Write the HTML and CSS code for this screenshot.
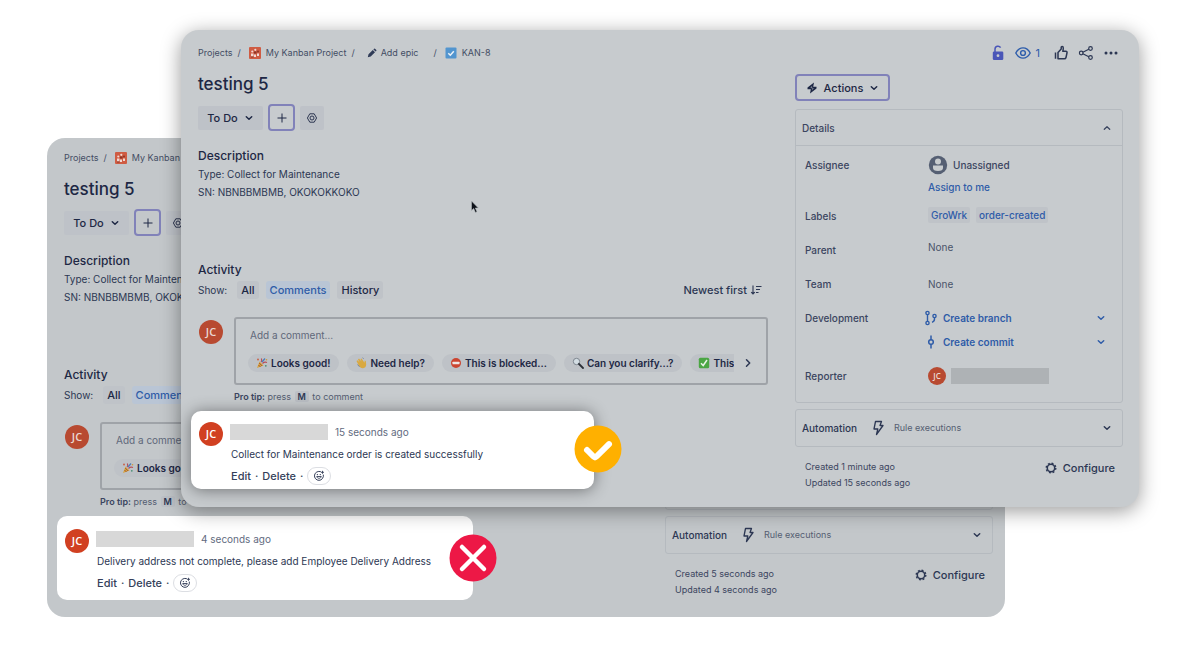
FILE: index.html
```html
<!DOCTYPE html>
<html lang="en">
<head>
    <meta charset="UTF-8">
    <meta name="viewport" content="width=device-width, initial-scale=1.0">
    <title>testing 5 - KAN-8</title>
    <link rel="stylesheet" href="styles.css">
</head>
<body>
    <!-- shared icons -->
    <svg class="sprite" aria-hidden="true">
        <symbol id="project" viewBox="0 0 12 12">
            <rect width="12" height="12" rx="1" fill="#cf5c43"/>
            <path d="M2 6.500h2.500v3H2zM5 7.500h2v2.500H5zM8 6.500h2v2.500H8z" fill="#f1d9d3"/>
            <circle cx="3.300" cy="4.500" r="1.100" fill="#f1d9d3"/>
            <circle cx="6.300" cy="2.800" r="1.100" fill="#f1d9d3"/>
            <circle cx="9" cy="4.500" r="1" fill="#8c3526"/>
            <path d="M5 4.500h2.500v2H5zM2 9.500h2.500v1H2z" fill="#8c3526"/>
        </symbol>
        <symbol id="down" viewBox="0 0 10 10">
            <path d="M2.300 3.800 5 6.300l2.700-2.500" fill="none" stroke="currentColor" stroke-width="1.500" stroke-linecap="round" stroke-linejoin="round"/>
        </symbol>
        <symbol id="plus" viewBox="0 0 12 12">
            <path d="M6 1.500v9M1.500 6h9" fill="none" stroke="currentColor" stroke-width="1"/>
        </symbol>
        <symbol id="hexagon" viewBox="0 0 12 12">
            <path d="M3.800 1.800h4.400L10.600 6l-2.400 4.200H3.800L1.400 6z" fill="none" stroke="currentColor" stroke-width=".9" stroke-linejoin="round"/>
            <circle cx="6" cy="6" r="2" fill="none" stroke="currentColor" stroke-width=".9"/>
        </symbol>
        <symbol id="party" viewBox="0 0 12 12">
            <path d="M1 11 3.500 4.500l4 4z" fill="#d9a33c"/>
            <path d="m2.500 8 2 2M3.200 6l3 3" stroke="#a05a35" stroke-width="1"/>
            <path d="M5 5c1-1 1-2 .4-3.500M6.500 6.500c1.500-1.500 3-1.500 4.500-1" fill="none" stroke="#b84f58" stroke-width="1.200"/>
            <path d="m6 5 3-3.500" stroke="#4d7fba" stroke-width="1.300"/>
            <circle cx="2" cy="2.500" r=".9" fill="#c95c42"/>
            <circle cx="10.500" cy="2.800" r=".8" fill="#d19a35"/>
            <circle cx="9.800" cy="8.800" r=".9" fill="#4a8f75"/>
        </symbol>
        <symbol id="bolt" viewBox="0 0 14 16">
            <path d="M4.500 1.500h6L9 5.500h3L5.500 14.500 6.800 9H3z" fill="none" stroke="currentColor" stroke-width="1.300" stroke-linejoin="round"/>
        </symbol>
        <symbol id="gear" viewBox="0 0 12 12">
            <circle cx="6" cy="6" r="3.700" fill="none" stroke="currentColor" stroke-width="1.500"/>
            <circle cx="6" cy="6" r="4.800" fill="none" stroke="currentColor" stroke-width="1.400" stroke-dasharray="1.900 1.870"/>
        </symbol>
        <symbol id="smile" viewBox="0 0 12 12">
            <path d="M7.500 1.600A4.500 4.500 0 1 0 10.400 5" fill="none" stroke="currentColor" stroke-width="1" stroke-linecap="round"/>
            <path d="M3.700 6.500c.6 2.400 4 2.400 4.600 0z" fill="none" stroke="currentColor" stroke-width=".9"/>
            <circle cx="4.400" cy="4.600" r=".7" fill="currentColor"/>
            <circle cx="7.300" cy="4.600" r=".7" fill="currentColor"/>
            <path d="M9.500.8v3M8 2.300h3" stroke="currentColor" stroke-width=".9"/>
        </symbol>
    </svg>

    <div class="stage">
        <!-- failed request -->
        <section class="panel panel-back">
            <div class="main">
                <nav class="breadcrumb">
                    <a href="#">Projects</a><span>/</span>
                    <svg class="icon-12"><use href="#project"/></svg>
                    <a href="#">My Kanban Project</a>
                </nav>
                <h1>testing 5</h1>
                <div class="toolbar">
                    <button class="status">To Do <svg class="icon-10"><use href="#down"/></svg></button>
                    <button class="add" aria-label="Add"><svg class="icon-12"><use href="#plus"/></svg></button>
                    <button class="square" aria-label="Apps"><svg class="icon-12"><use href="#hexagon"/></svg></button>
                </div>
                <h2>Description</h2>
                <p>Type: Collect for Maintenance</p>
                <p>SN: NBNBBMBMB, OKOKOKKOKO</p>

                <h2 class="activity">Activity</h2>
                <div class="show">
                    <span>Show:</span>
                    <button class="tab">All</button>
                    <button class="tab active">Comments</button>
                </div>
                <div class="composer">
                    <span class="avatar">JC</span>
                    <div class="box">
                        <input type="text" placeholder="Add a comment…" aria-label="Comment">
                        <div class="chips">
                            <button class="chip"><svg class="icon-12"><use href="#party"/></svg>Looks good!</button>
                        </div>
                    </div>
                </div>
                <p class="tip"><b>Pro tip:</b> press <kbd>M</kbd> to comment</p>

                <article class="comment">
                    <span class="avatar">JC</span>
                    <div class="comment-body">
                        <div class="meta"><span class="name"></span><time>4 seconds ago</time></div>
                        <p class="message">Delivery address not complete, please add Employee Delivery Address</p>
                        <div class="links">
                            <button>Edit</button><span>·</span><button>Delete</button><span>·</span>
                            <button class="react" aria-label="React"><svg class="icon-12"><use href="#smile"/></svg></button>
                        </div>
                    </div>
                    <svg class="badge" viewBox="0 0 48 48" aria-label="Failed">
                        <circle cx="24" cy="24" r="23.500" fill="#ed1846"/>
                        <path d="m13 13 22 22M35 13 13 35" stroke="#fff" stroke-width="4.500" stroke-linecap="round"/>
                    </svg>
                </article>
            </div>
            <aside class="side">
                <div class="details"></div>
                <div class="automation">
                    <strong>Automation</strong>
                    <svg class="icon-bolt"><use href="#bolt"/></svg>
                    <span>Rule executions</span>
                    <svg class="icon-10"><use href="#down"/></svg>
                </div>
                <footer>
                    <div>
                        <p>Created 5 seconds ago</p>
                        <p>Updated 4 seconds ago</p>
                    </div>
                    <button class="configure"><svg class="icon-12"><use href="#gear"/></svg>Configure</button>
                </footer>
            </aside>
        </section>

        <!-- successful request -->
        <section class="panel panel-front">
            <div class="main">
                <nav class="breadcrumb">
                    <a href="#">Projects</a><span>/</span>
                    <svg class="icon-12"><use href="#project"/></svg>
                    <a href="#">My Kanban Project</a><span>/</span>
                    <a href="#" class="epic">
                        <svg class="icon-10" viewBox="0 0 10 10"><path d="m.8 9.200.7-2.900 4.300-4.300 2.200 2.200-4.300 4.300zM6.400 1.400l.7-.7q.6-.4 1.200.2l.8.8q.6.600.2 1.200l-.7.700z" fill="#2f3b57"/></svg>
                        Add epic
                    </a>
                    <span>/</span>
                    <svg class="icon-12" viewBox="0 0 12 12"><rect x=".5" y=".5" width="11" height="11" rx="1" fill="#5295cf"/><path d="m3.300 6.200 2 2 3.500-4" fill="none" stroke="#edf3f8" stroke-width="1.500"/></svg>
                    <a href="#">KAN-8</a>
                </nav>
                <h1>testing 5</h1>
                <div class="toolbar">
                    <button class="status">To Do <svg class="icon-10"><use href="#down"/></svg></button>
                    <button class="add" aria-label="Add"><svg class="icon-12"><use href="#plus"/></svg></button>
                    <button class="square" aria-label="Apps"><svg class="icon-12"><use href="#hexagon"/></svg></button>
                </div>
                <h2>Description</h2>
                <p>Type: Collect for Maintenance</p>
                <p>SN: NBNBBMBMB, OKOKOKKOKO</p>

                <h2 class="activity">Activity</h2>
                <div class="show">
                    <span>Show:</span>
                    <button class="tab">All</button>
                    <button class="tab active">Comments</button>
                    <button class="tab">History</button>
                    <button class="sort">Newest first
                        <svg class="icon-12" viewBox="0 0 12 12"><path d="M3 1.500v8.500M1.200 8.200 3 10l1.800-1.800M6 2.500h5.500M6 5.500h4M6 8.500h2.500" fill="none" stroke="currentColor" stroke-width="1.100"/></svg>
                    </button>
                </div>
                <div class="composer">
                    <span class="avatar">JC</span>
                    <div class="box">
                        <input type="text" placeholder="Add a comment…" aria-label="Comment">
                        <div class="chips">
                            <button class="chip"><svg class="icon-12"><use href="#party"/></svg>Looks good!</button>
                            <button class="chip"><svg class="icon-12" viewBox="0 0 12 12"><path d="m1.500 4 1-.8 2 2L3 2.500l1-.9 2.600 2.900L5.500 2l1-.6 3 4.300.2-2.200 1.100.4.400 3.800q-.2 3-3.200 3.500Q6 11.500 4 9z" fill="#d9a941"/><path d="m2.500 7.500 2 2.300M7.500.8l1.200.8" stroke="#6c7a95" stroke-width=".8"/></svg>Need help?</button>
                            <button class="chip"><svg class="icon-12" viewBox="0 0 12 12"><circle cx="6" cy="6" r="5" fill="#cb4531"/><rect x="2.500" y="4.700" width="7" height="2.600" rx=".6" fill="#eee6e4"/></svg>This is blocked...</button>
                            <button class="chip"><svg class="icon-12" viewBox="0 0 12 12"><circle cx="4.500" cy="4.500" r="3.200" fill="#d3dde3" stroke="#7d858e" stroke-width="1"/><path d="m7 7 4 4" stroke="#2b2f36" stroke-width="1.800" stroke-linecap="round"/></svg>Can you clarify...?</button>
                            <button class="chip"><svg class="icon-12" viewBox="0 0 12 12"><rect x=".8" y=".8" width="10.400" height="10.400" rx="1.500" fill="#4ba644"/><path d="m3 6.200 2.200 2.300L9 3" fill="none" stroke="#e8f3e7" stroke-width="1.500"/></svg>This is on track</button>
                        </div>
                        <button class="next" aria-label="More suggestions"><svg class="icon-10" viewBox="0 0 10 10"><path d="M3.500 1.800 6.700 5 3.500 8.200" fill="none" stroke="currentColor" stroke-width="1.500" stroke-linecap="round" stroke-linejoin="round"/></svg></button>
                    </div>
                </div>
                <p class="tip"><b>Pro tip:</b> press <kbd>M</kbd> to comment</p>

                <article class="comment">
                    <span class="avatar">JC</span>
                    <div class="comment-body">
                        <div class="meta"><span class="name"></span><time>15 seconds ago</time></div>
                        <p class="message">Collect for Maintenance order is created successfully</p>
                        <div class="links">
                            <button>Edit</button><span>·</span><button>Delete</button><span>·</span>
                            <button class="react" aria-label="React"><svg class="icon-12"><use href="#smile"/></svg></button>
                        </div>
                    </div>
                    <svg class="badge" viewBox="0 0 48 48" aria-label="Succeeded">
                        <circle cx="24" cy="24" r="23.500" fill="#ffb000"/>
                        <path d="m13 25 6.500 6.500q1.500 1.500 3 0L35 19.200" fill="none" stroke="#fff" stroke-width="6" stroke-linecap="round" stroke-linejoin="round"/>
                    </svg>
                </article>
            </div>

            <aside class="side">
                <div class="tools">
                    <button aria-label="Unlocked"><svg class="icon-16" viewBox="0 0 16 16"><path d="M5 7V4.200a3 3 0 0 1 5.600-1.500" fill="none" stroke="#4a56b8" stroke-width="1.500"/><rect x="2.800" y="6.500" width="10.500" height="8.500" rx="1.300" fill="#4a56b8"/><circle cx="8" cy="10.700" r="1.400" fill="#c7cbce"/></svg></button>
                    <button class="watch" aria-label="Watchers, 1"><svg class="icon-16" viewBox="0 0 16 16"><path d="M.8 8Q3.500 2.900 8 2.900T15.200 8Q12.500 13.100 8 13.100T.8 8z" fill="none" stroke="currentColor" stroke-width="1.400"/><circle cx="8" cy="8" r="2.400" fill="none" stroke="currentColor" stroke-width="1.400"/></svg>1</button>
                    <button class="like" aria-label="Like"><svg class="icon-16" viewBox="0 0 16 16"><path d="M2.500 7.500v6.300M5 7.500 8.200 4V2.500q0-1 1-.9 1.300.2 1.100 2L9.800 6.300h3q1.500.1 1.200 1.600l-1 4.600q-.3 1.300-1.600 1.300H5z" fill="none" stroke="currentColor" stroke-width="1.500" stroke-linejoin="round"/></svg></button>
                    <button aria-label="Share"><svg class="icon-16" viewBox="0 0 16 16"><path d="m4.800 7.300 6-3M4.800 8.700l6 3" stroke="currentColor" stroke-width="1.200"/><g fill="none" stroke="currentColor" stroke-width="1.200"><circle cx="3.200" cy="8" r="1.800"/><circle cx="12.500" cy="3.500" r="1.800"/><circle cx="12.500" cy="12.500" r="1.800"/></g></svg></button>
                    <button aria-label="More"><svg class="icon-16" viewBox="0 0 16 16"><g fill="currentColor"><circle cx="3" cy="8" r="1.500"/><circle cx="8" cy="8" r="1.500"/><circle cx="13" cy="8" r="1.500"/></g></svg></button>
                </div>
                <button class="actions">
                    <svg class="icon-12" viewBox="0 0 12 12"><path d="M8 .5 1.500 5.500v1.700h3.300L4 11.500l6.500-5V4.700H7.200z" fill="currentColor"/><path d="m6.300 3.800-2 1.900h2.500L6 8.200l1.800-1.900H5.500z" fill="#aeb3bc"/></svg>
                    Actions
                    <svg class="icon-10"><use href="#down"/></svg>
                </button>

                <div class="details">
                    <header>Details
                        <svg class="icon-10" viewBox="0 0 10 10"><path d="M2.300 6.300 5 3.800l2.700 2.500" fill="none" stroke="currentColor" stroke-width="1.300" stroke-linecap="round" stroke-linejoin="round"/></svg>
                    </header>
                    <dl>
                        <dt>Assignee</dt>
                        <dd class="assignee">
                            <span class="person"><svg class="icon-20" viewBox="0 0 20 20"><circle cx="10" cy="10" r="9.200" fill="#555f73"/><circle cx="10" cy="6.500" r="3" fill="#c7cbce"/><path d="M5 10.500h10V13q0 3-5 3t-5-3z" fill="#c7cbce"/></svg>Unassigned</span>
                            <a href="#">Assign to me</a>
                        </dd>
                        <dt>Labels</dt>
                        <dd class="labels"><a href="#">GroWrk</a><a href="#">order-created</a></dd>
                        <dt>Parent</dt>
                        <dd class="parent">None</dd>
                        <dt>Team</dt>
                        <dd>None</dd>
                        <dt>Development</dt>
                        <dd class="development">
                            <a href="#">
                                <svg class="icon-16" viewBox="0 0 16 16"><g fill="none" stroke="currentColor" stroke-width="1.400"><circle cx="4.500" cy="3" r="1.600"/><circle cx="4.500" cy="13" r="1.600"/><circle cx="11.500" cy="6" r="1.600"/><path d="M4.500 4.600v6.800M11.500 7.600v1.500q0 2.500-2.500 3.200"/></g></svg>
                                Create branch
                                <svg class="icon-10"><use href="#down"/></svg>
                            </a>
                            <a href="#">
                                <svg class="icon-16" viewBox="0 0 16 16"><g fill="none" stroke="currentColor" stroke-width="1.500"><circle cx="8" cy="8" r="2.300"/><path d="M8 1.500v4.200M8 10.300v4.200"/></g></svg>
                                Create commit
                                <svg class="icon-10"><use href="#down"/></svg>
                            </a>
                        </dd>
                        <dt>Reporter</dt>
                        <dd class="reporter"><span class="avatar small">JC</span><span class="name"></span></dd>
                    </dl>
                </div>
                <div class="automation">
                    <strong>Automation</strong>
                    <svg class="icon-bolt"><use href="#bolt"/></svg>
                    <span>Rule executions</span>
                    <svg class="icon-10"><use href="#down"/></svg>
                </div>
                <footer>
                    <div>
                        <p>Created 1 minute ago</p>
                        <p>Updated 15 seconds ago</p>
                    </div>
                    <button class="configure"><svg class="icon-12"><use href="#gear"/></svg>Configure</button>
                </footer>
            </aside>
            <svg class="cursor" viewBox="0 0 10 14" aria-hidden="true"><path d="M1.500 1v9.500l2.200-2 1.700 4 1.600-.7-1.700-3.800h3z" fill="#0d1118" stroke="#b3b8bc" stroke-width=".6"/></svg>
        </section>
    </div>
</body>
</html>
```
FILE: styles.css
```css
* {
    box-sizing: border-box;
}
body {
    font-family: Inter, Arial, sans-serif;
    font-size: 10px;
    line-height: 18px;
    color: #2c3753;
    margin: 0;
    background-color: #fff;
}
h1, h2, p, dl, dd {
    margin: 0;
}
a {
    color: inherit;
    text-decoration: none;
}
button {
    display: inline-flex;
    align-items: center;
    justify-content: center;
    padding: 0;
    border: none;
    background: none;
    font: inherit;
    color: inherit;
    white-space: nowrap;
    cursor: pointer;
}
svg {
    flex: none;
}
.sprite {
    position: absolute;
    width: 0;
    height: 0;
}
.icon-10 {
    width: 10px;
    height: 10px;
}
.icon-12 {
    width: 12px;
    height: 12px;
}
.icon-16 {
    width: 16px;
    height: 16px;
}
.icon-20 {
    width: 20px;
    height: 20px;
}
.icon-bolt {
    width: 14px;
    height: 16px;
}

/* overlapping windows */
.stage {
    position: relative;
    min-height: 650px;
    overflow: hidden;
}
.panel {
    position: absolute;
    display: flex;
    gap: 27px;
    border-radius: 18px;
}
.panel-back {
    top: 138px;
    left: 47px;
    right: 181px;
    padding: 13px 12px 17px 10px;
    background-color: #c3c7ca;
}
.panel-front {
    top: 30px;
    left: 181px;
    right: 47px;
    padding: 16px 16px 18px 10px;
    background-color: #c7cbce;
    box-shadow: 0 4px 20px rgba(0, 0, 0, 0.4);
}
.main {
    flex: 1;
    min-width: 0;
}
.main > * {
    margin-left: 7px;
}

.breadcrumb {
    display: flex;
    align-items: center;
    gap: 5px;
    height: 14px;
    font-size: 9px;
    line-height: 14px;
    color: #434d64;
    white-space: nowrap;
}
.breadcrumb span {
    margin-right: 3px;
}
.epic {
    display: flex;
    align-items: center;
    gap: 4px;
    margin: 0 10px 0 4px;
}
h1 {
    margin-top: 13px;
    font-size: 17px;
    line-height: 22px;
    font-weight: 500;
    color: #1d2744;
}
.toolbar {
    display: flex;
    align-items: center;
    gap: 5px;
    margin-top: 9px;
    color: #1d2744;
}
.status {
    gap: 6px;
    width: 65px;
    height: 24px;
    border-radius: 2px;
    background-color: #bec2c8;
    font-size: 11px;
    font-weight: 500;
}
.add {
    width: 27px;
    height: 27px;
    border: 2px solid #8182b9;
    border-radius: 4px;
}
.square {
    width: 24px;
    height: 24px;
    border-radius: 2px;
    background-color: #bec2c8;
}
h2 {
    margin-top: 16px;
    font-size: 12px;
    line-height: 18px;
    font-weight: 500;
    color: #1d2744;
}
h2.activity {
    margin-top: 60px;
}
.show {
    display: flex;
    align-items: center;
    gap: 7px;
    margin-top: 2px;
}
.show span {
    margin-right: 3px;
}
.tab {
    height: 18px;
    padding: 0 4px;
    border-radius: 3px;
    background-color: #bfc3c8;
    font-size: 11px;
    font-weight: 500;
    color: #1d2744;
}
.tab.active {
    background-color: #b9c5d5;
    color: #2f5ca8;
}
.sort {
    gap: 3px;
    margin: 0 6px 0 auto;
    font-size: 11px;
    font-weight: 500;
}

.avatar {
    display: flex;
    align-items: center;
    justify-content: center;
    flex: none;
    width: 24px;
    height: 24px;
    border-radius: 50%;
    background-color: #b84a31;
    font-family: "Open Sans", sans-serif;
    font-size: 11px;
    font-weight: 600;
    color: #ead9d5;
}
.avatar.small {
    width: 18px;
    height: 18px;
    font-size: 8px;
}
.composer {
    display: flex;
    gap: 11px;
    margin-top: 18px;
    padding-left: 1px;
}
.composer .avatar {
    margin-top: 3px;
}
.box {
    display: grid;
    grid-template-columns: minmax(0, 1fr) 20px;
    align-content: start;
    gap: 10px 4px;
    flex: 1;
    min-width: 0;
    height: 68px;
    padding: 7px 8px 0 12px;
    border: 2px solid #9fa3a8;
    border-radius: 3px;
}
.box input {
    grid-column: 1 / -1;
    height: 18px;
    padding: 0 2px;
    border: none;
    outline: none;
    background: none;
    font: inherit;
    color: #1d2744;
}
.box input::placeholder {
    color: #5f687a;
    opacity: 1;
}
.chips {
    display: flex;
    gap: 8px;
    overflow: hidden;
}
.chip {
    flex: none;
    gap: 3px;
    height: 18px;
    padding: 0 9px 0 8px;
    border-radius: 9px;
    background-color: #bec2c7;
    font-weight: 600;
    color: #1d2744;
}
.next {
    height: 18px;
}
.tip {
    margin: 5px 0 0 43px;
    font-size: 9px;
    line-height: 14px;
    color: #545d71;
}
.tip b {
    font-weight: 600;
    color: #3b4560;
}
kbd {
    padding: 0 3px;
    margin: 0 1px;
    border-radius: 2px;
    background-color: #bcc0c6;
    font-family: inherit;
    font-size: 9px;
    font-weight: 600;
    color: #2c3753;
}

.comment {
    position: relative;
    display: flex;
    gap: 7px;
    margin: 7px 0 0;
    padding: 11px 8px 0;
    border-radius: 10px;
    background-color: #fff;
}
.panel-front .comment {
    max-width: 403px;
    height: 78px;
    box-shadow: 0 1px 16px rgba(0, 0, 0, 0.45);
}
.panel-back .comment {
    max-width: 416px;
    height: 84px;
    padding-top: 13px;
}
.comment .avatar {
    background-color: #d14021;
    color: #fff;
}
.meta {
    display: flex;
    align-items: center;
    gap: 7px;
    height: 20px;
}
.meta time {
    color: #626b80;
}
.name {
    width: 98px;
    height: 16px;
    background-color: #d8d8d8;
}
.message {
    padding: 3px 0 0 1px;
    white-space: nowrap;
}
.links {
    display: flex;
    align-items: center;
    gap: 4px;
    height: 18px;
    margin-top: 4px;
    padding-left: 1px;
    color: #353f5a;
    font-size: 11px;
    font-weight: 500;
}
.react {
    width: 24px;
    height: 18px;
    border: 1px solid #dcdee3;
    border-radius: 9px;
}
.badge {
    position: absolute;
    top: 14px;
    right: -28px;
    width: 48px;
    height: 48px;
}
.panel-back .badge {
    top: 18px;
    right: -24px;
}

.side {
    display: flex;
    flex-direction: column;
    flex: 0 0 328px;
}
.tools {
    display: flex;
    align-items: center;
    justify-content: flex-end;
    gap: 9px;
    height: 14px;
    padding-right: 4px;
}
.watch {
    gap: 5px;
    font-size: 11px;
    color: #2c5cab;
}
.like {
    padding-left: 4px;
}
.actions {
    align-self: flex-start;
    gap: 6px;
    width: 95px;
    height: 27px;
    margin-top: 14px;
    border: 2px solid #8182b9;
    border-radius: 4px;
    font-size: 11px;
    font-weight: 500;
    color: #1d2744;
}
.details {
    flex: 1;
    border: 1px solid #b5babf;
    border-radius: 3px;
}
.panel-front .details {
    margin-top: 8px;
}
.details header {
    display: flex;
    align-items: center;
    justify-content: space-between;
    height: 36px;
    padding: 0 10px 0 6px;
    border-bottom: 1px solid #b5babf;
    font-weight: 500;
    color: #3b4560;
}
dl {
    display: grid;
    grid-template-columns: 123px 1fr;
    row-gap: 16px;
    padding: 10px 16px 0 9px;
}
dt {
    font-weight: 500;
    color: #3b4560;
}
dd {
    color: #4a546a;
}
.assignee {
    margin-bottom: -5px;
}
.assignee a {
    display: block;
    margin-top: 4px;
}
.assignee a, .labels a, .development a {
    font-weight: 500;
    color: #2f5ca8;
}
.person {
    display: flex;
    align-items: center;
    gap: 5px;
    height: 18px;
    font-weight: 500;
    color: #3b4560;
}
.labels {
    display: flex;
    gap: 6px;
}
.labels a {
    height: 16px;
    padding: 0 3px;
    border-radius: 2px;
    background-color: #bfc3c8;
    line-height: 16px;
}
.parent {
    margin-top: -3px;
}
.development {
    margin: -3px 0 -3px -5px;
}
.development a {
    display: flex;
    align-items: center;
    gap: 4px;
    height: 24px;
    font-weight: 600;
}
.development a .icon-10 {
    margin-left: auto;
}
.reporter {
    display: flex;
    align-items: center;
    gap: 5px;
}
.reporter .name {
    background-color: #aeb2b5;
}
.automation {
    display: flex;
    align-items: center;
    height: 38px;
    margin-top: 6px;
    padding: 0 10px 0 6px;
    border: 1px solid #b5babf;
    border-radius: 3px;
}
.automation strong {
    font-size: 10px;
    font-weight: 500;
}
.automation span {
    font-size: 9px;
    color: #555e72;
}
.automation .icon-bolt {
    margin: 0 9px 0 14px;
}
.automation .icon-10 {
    margin-left: auto;
}
footer {
    display: flex;
    align-items: flex-start;
    justify-content: space-between;
    height: 30px;
    margin-top: 12px;
    padding: 0 8px 0 10px;
}
.panel-back footer {
    height: 34px;
}
footer p {
    font-size: 9px;
    line-height: 16px;
    color: #3b4560;
}
.configure {
    gap: 6px;
    font-size: 11px;
    font-weight: 500;
}
.cursor {
    position: absolute;
    top: 170px;
    left: 289px;
    width: 10px;
    height: 14px;
}
```
